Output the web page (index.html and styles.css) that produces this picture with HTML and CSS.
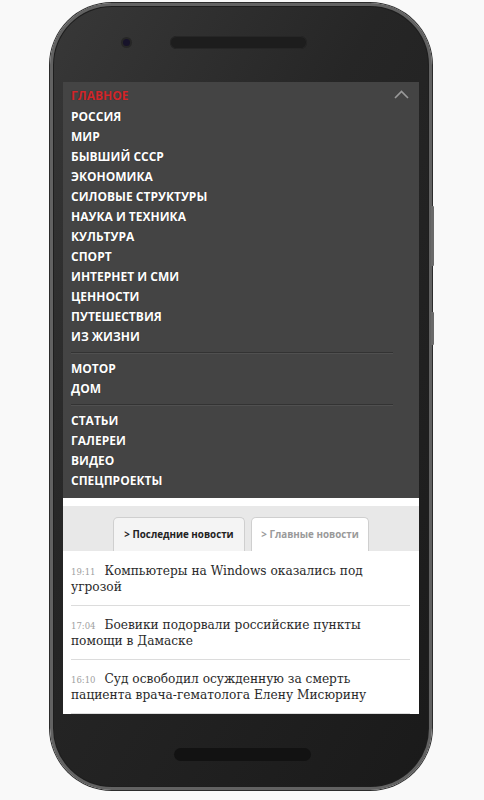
FILE: index.html
```html
<!DOCTYPE html>
<html lang="ru">
<head>
<meta charset="utf-8">
<title>Лента</title>
<link rel="stylesheet" href="styles.css">
</head>
<body>
<div class="phone">
  <span class="side-btn side-btn-1"></span>
  <span class="side-btn side-btn-2"></span>
  <div class="phone-top">
    <span class="camera"></span>
    <span class="speaker"></span>
  </div>
  <div class="screen">
    <nav class="menu">
      <div class="menu-head">
        <a class="menu-item menu-item-active">ГЛАВНОЕ</a>
        <svg class="chevron" width="15" height="9" viewBox="0 0 15 9"><polyline points="1,8 7.5,1.5 14,8" fill="none" stroke="#9a9a9a" stroke-width="1.6"/></svg>
      </div>
      <a class="menu-item">РОССИЯ</a>
      <a class="menu-item">МИР</a>
      <a class="menu-item">БЫВШИЙ СССР</a>
      <a class="menu-item">ЭКОНОМИКА</a>
      <a class="menu-item">СИЛОВЫЕ СТРУКТУРЫ</a>
      <a class="menu-item">НАУКА И ТЕХНИКА</a>
      <a class="menu-item">КУЛЬТУРА</a>
      <a class="menu-item">СПОРТ</a>
      <a class="menu-item">ИНТЕРНЕТ И СМИ</a>
      <a class="menu-item">ЦЕННОСТИ</a>
      <a class="menu-item">ПУТЕШЕСТВИЯ</a>
      <a class="menu-item">ИЗ ЖИЗНИ</a>
      <div class="menu-sep"></div>
      <a class="menu-item">МОТОР</a>
      <a class="menu-item">ДОМ</a>
      <div class="menu-sep"></div>
      <a class="menu-item">СТАТЬИ</a>
      <a class="menu-item">ГАЛЕРЕИ</a>
      <a class="menu-item">ВИДЕО</a>
      <a class="menu-item">СПЕЦПРОЕКТЫ</a>
    </nav>
    <div class="white-gap"></div>
    <div class="tabs">
      <div class="tab tab-latest">&gt; Последние новости</div>
      <div class="tab tab-main">&gt; Главные новости</div>
    </div>
    <ul class="news">
      <li class="news-item"><span class="time">19:11</span><span class="title">Компьютеры на Windows оказались под угрозой</span></li>
      <li class="news-item"><span class="time">17:04</span><span class="title">Боевики подорвали российские пункты помощи в Дамаске</span></li>
      <li class="news-item"><span class="time">16:10</span><span class="title">Суд освободил осужденную за смерть пациента врача-гематолога Елену Мисюрину</span></li>
    </ul>
  </div>
  <div class="phone-bottom">
    <span class="home-bar"></span>
  </div>
</div>
</body>
</html>
```
FILE: styles.css
```css
html, body {
  margin: 0;
  padding: 0;
}
body {
  background: #f9f9f9;
  width: 484px;
  height: 800px;
  overflow: hidden;
}
.phone {
  position: relative;
  box-sizing: border-box;
  width: 382px;
  height: 787px;
  margin: 3px 0 0 50px;
  border: 3px solid #626262;
  border-radius: 62px;
  box-shadow: 0 0 0 1px #2c2c2c, inset 0 0 0 1px #1e1e1e;
  background: linear-gradient(120deg, #383838 0%, #262626 40%, #1a1a1a 100%);
  display: flex;
  flex-direction: column;
}
.side-btn {
  position: absolute;
  right: -5px;
  width: 3px;
  background: #6a6a6a;
  border-radius: 0 1px 1px 0;
}
.side-btn-1 { top: 200px; height: 60px; }
.side-btn-2 { top: 306px; height: 33px; }
.phone-top {
  display: flex;
  align-items: center;
  padding: 30px 0 0 70px;
  gap: 40px;
}
.camera {
  width: 7px;
  height: 7px;
  border-radius: 50%;
  background: #17132a;
  box-shadow: 0 0 0 2px #262626;
}
.speaker {
  width: 137px;
  height: 13px;
  border-radius: 7px;
  background: #1d1d1d;
  box-shadow: inset 0 0 0 1px #262626;
}
.screen {
  margin: 33px 0 0 10px;
  width: 356px;
  height: 632px;
  background: #fff;
  overflow: hidden;
  display: flex;
  flex-direction: column;
}
.menu {
  background: #444444;
  padding: 2px 8px 7px 8px;
  display: flex;
  flex-direction: column;
}
.menu-head {
  display: flex;
  align-items: center;
  justify-content: space-between;
  height: 23px;
  padding-right: 2px;
}
.menu-item {
  display: block;
  height: 20px;
  line-height: 20px;
  font-family: "Open Sans", sans-serif;
  font-weight: 700;
  font-size: 12px;
  color: #fff;
  text-decoration: none;
  text-shadow: 0 0 1px rgba(0, 0, 0, 0.4);
}
.menu-head .menu-item {
  height: 23px;
  line-height: 23px;
}
.menu-item-active {
  color: #d2262b;
}
.chevron {
  display: block;
  margin-top: -3px;
}
.menu-sep {
  margin: 5px 18px 5px 0;
  height: 0;
  border-top: 1px solid #333333;
  border-bottom: 1px solid #505050;
}
.white-gap {
  height: 10px;
  background: #fff;
}
.tabs {
  height: 45px;
  box-sizing: border-box;
  background: #e8e8e8;
  padding-top: 11px;
  display: flex;
  justify-content: center;
  align-items: flex-end;
  gap: 6px;
}
.tab {
  box-sizing: border-box;
  height: 34px;
  display: flex;
  align-items: center;
  justify-content: center;
  border: 1px solid #cfcfcf;
  border-bottom: none;
  border-radius: 5px 5px 0 0;
  font-family: "Open Sans", sans-serif;
  font-weight: 700;
  font-size: 9.8px;
}
.tab-latest {
  width: 132px;
  background: #f4f4f4;
  color: #222;
}
.tab-main {
  width: 118px;
  background: #fff;
  color: #9a9a9a;
}
.news {
  list-style: none;
  margin: 0;
  padding: 0 9px 0 8px;
}
.news-item {
  padding: 12px 0 10px 0;
  border-bottom: 1px solid #dcdcdc;
  font-family: "DejaVu Serif", serif;
  font-size: 12.2px;
  line-height: 16px;
  color: #2a2a2a;
}
.news-item + .news-item {
  padding-top: 11px;
}
.time {
  display: inline-block;
  font-size: 8.5px;
  line-height: 10px;
  color: #a0a0a0;
  margin-right: 9px;
}
.phone-bottom {
  display: flex;
  justify-content: center;
  padding: 34px 0 0 2px;
}
.home-bar {
  width: 137px;
  height: 13px;
  border-radius: 7px;
  background: #121212;
}
```
